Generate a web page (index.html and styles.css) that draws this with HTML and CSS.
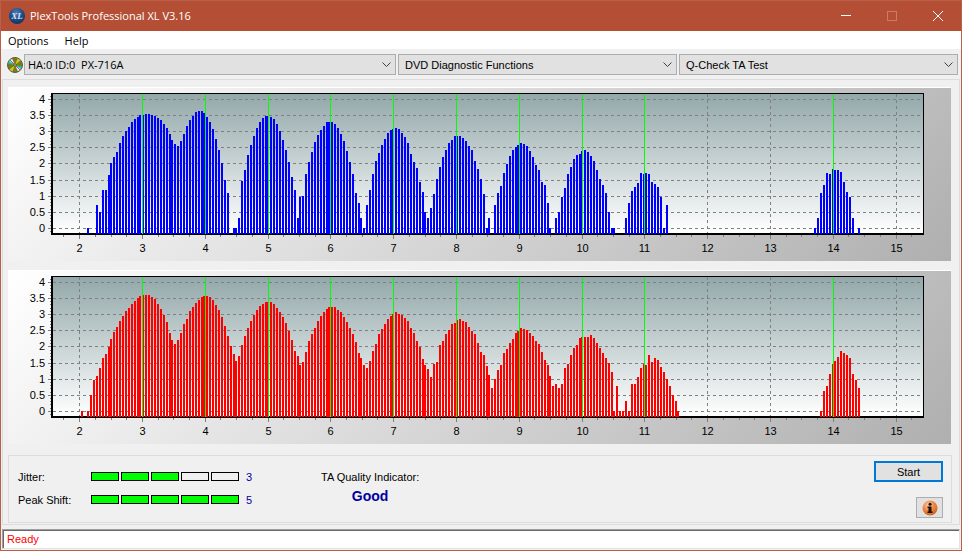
FILE: index.html
```html
<!DOCTYPE html>
<html lang="en">
<head>
<meta charset="utf-8">
<meta name="viewport" content="width=device-width, initial-scale=1">
<title>PlexTools Professional XL V3.16</title>
<link rel="stylesheet" href="styles.css">
</head>
<body>
<div class="window">
  <header class="titlebar">
    <svg class="app-icon" viewBox="0 0 16 16" aria-hidden="true">
      <defs>
        <radialGradient id="ball" cx="45%" cy="30%" r="70%">
          <stop offset="0" stop-color="#4f7fb5"/>
          <stop offset="0.6" stop-color="#1d4a86"/>
          <stop offset="1" stop-color="#123463"/>
        </radialGradient>
      </defs>
      <circle cx="8" cy="8" r="8" fill="url(#ball)"/>
      <text class="app-icon-text" x="8" y="11" text-anchor="middle">XL</text>
    </svg>
    <h1 class="title">PlexTools Professional XL V3.16</h1>
    <div class="window-buttons">
      <button class="window-button" type="button" aria-label="Minimize"><svg class="glyph" viewBox="0 0 10 10"><path d="M0 4.500h10"/></svg></button>
      <button class="window-button" type="button" aria-label="Maximize" disabled><svg class="glyph" viewBox="0 0 10 10"><path d="M.5.5h9v9h-9z"/></svg></button>
      <button class="window-button" type="button" aria-label="Close"><svg class="glyph smooth" viewBox="0 0 10 10"><path d="M0 0l10 10M10 0L0 10"/></svg></button>
    </div>
  </header>

  <nav class="menubar">
    <button class="menu" type="button">Options</button>
    <button class="menu" type="button">Help</button>
  </nav>

  <div class="toolbar">
    <svg class="disc" viewBox="0 0 16 16" aria-hidden="true">
      <circle cx="8" cy="8" r="7.5" fill="#7b7b1c" stroke="#5a5a50"/>
      <path d="M8 8L2 4.500A7 7 0 0 1 5 1.800z" fill="#f4f4f4"/>
      <path d="M8 8L1.300 6.500A7 7 0 0 1 2.500 3.800z" fill="#27d7c8"/>
      <path d="M8 8L14 11.500A7 7 0 0 1 11 14.200z" fill="#f4f4f4"/>
      <path d="M8 8L14.700 9.500A7 7 0 0 1 13.500 12.200z" fill="#27d7c8"/>
      <path d="M8 8L13.500 3.500A7 7 0 0 0 10.500 1.500z" fill="#c8c81e"/>
      <path d="M8 8L2.500 12.500A7 7 0 0 0 5.500 14.500z" fill="#c8c81e"/>
      <path d="M8 8L3 3M8 8L13 13" stroke="#c23ad0"/>
      <path d="M8 8L2 6M8 8L14 10" stroke="#20c040"/>
      <circle cx="8" cy="8" r="1.500" fill="#3d3d16"/>
      <circle cx="8" cy="8" r="0.800" fill="#e8e8e8"/>
    </svg>
    <div class="combos">
      <div class="combo">
        <select class="combo-field drive" aria-label="Drive"><option>HA:0 ID:0&nbsp; PX-716A</option></select>
        <svg class="chevron" viewBox="0 0 9 6" aria-hidden="true"><path d="M.5.500l4 4 4-4"/></svg>
      </div>
      <div class="combo">
        <select class="combo-field" aria-label="Function group"><option>DVD Diagnostic Functions</option></select>
        <svg class="chevron" viewBox="0 0 9 6" aria-hidden="true"><path d="M.5.500l4 4 4-4"/></svg>
      </div>
      <div class="combo">
        <select class="combo-field" aria-label="Test"><option>Q-Check TA Test</option></select>
        <svg class="chevron" viewBox="0 0 9 6" aria-hidden="true"><path d="M.5.500l4 4 4-4"/></svg>
      </div>
    </div>
  </div>

  <main class="page">
    <section class="chart" aria-label="Pit lengths"><svg class="plot" id="pits" viewBox="0 0 943 174" role="img"></svg></section>
    <section class="chart" aria-label="Land lengths"><svg class="plot" id="lands" viewBox="0 0 943 174" role="img"></svg></section>

    <section class="results">
      <div class="scores">
        <span class="score-name">Jitter:</span>
        <div class="meter" role="meter" aria-label="Jitter" aria-valuemin="0" aria-valuemax="5" aria-valuenow="3">
          <span class="cell on"></span><span class="cell on"></span><span class="cell on"></span><span class="cell"></span><span class="cell"></span>
        </div>
        <span class="score-value">3</span>
        <span class="score-name">Peak Shift:</span>
        <div class="meter" role="meter" aria-label="Peak Shift" aria-valuemin="0" aria-valuemax="5" aria-valuenow="5">
          <span class="cell on"></span><span class="cell on"></span><span class="cell on"></span><span class="cell on"></span><span class="cell on"></span>
        </div>
        <span class="score-value">5</span>
      </div>
      <div class="quality">
        <span class="quality-name">TA Quality Indicator:</span>
        <strong class="quality-value">Good</strong>
      </div>
      <div class="actions">
        <button class="start" type="button">Start</button>
        <button class="info" type="button" aria-label="Information">
          <svg class="info-icon" viewBox="0 0 16 16" aria-hidden="true">
            <defs>
              <radialGradient id="orange" cx="40%" cy="30%" r="70%">
                <stop offset="0" stop-color="#ffc9a0"/>
                <stop offset="0.5" stop-color="#f08a48"/>
                <stop offset="1" stop-color="#cf6420"/>
              </radialGradient>
            </defs>
            <circle cx="8" cy="8" r="7.5" fill="url(#orange)"/>
            <circle cx="8" cy="4.200" r="1.500" fill="#1c1008"/>
            <path d="M5.500 6.500H9.500V11.500H10.500V13H5.500V11.500H6.500V8H5.500z" fill="#1c1008"/>
          </svg>
        </button>
      </div>
    </section>
  </main>

  <footer class="statusbar">Ready</footer>
</div>
<script src="charts.js"></script>
</body>
</html>
```
FILE: styles.css
```css
* {
  box-sizing: border-box;
}

body {
  margin: 0;
  background: #f0f0f0;
  color: #000;
  font: 11px/14px "Liberation Sans", Arial, sans-serif;
}

button,
select {
  margin: 0;
  font: inherit;
  color: inherit;
}

.window {
  display: flex;
  flex-direction: column;
  min-height: 100vh;
  border: 1px solid #bb6048;
}

.titlebar {
  display: flex;
  align-items: center;
  height: 30px;
  padding-left: 8px;
  background: #b44f35;
  color: #fff;
}

.app-icon {
  width: 16px;
  height: 16px;
  margin-right: 5px;
}

.app-icon-text {
  fill: #d5e2f0;
  font: italic bold 9px "Liberation Serif", serif;
}

.title {
  flex: 1;
  margin: 0;
  font: 11px/16px "Open Sans", "Noto Sans", sans-serif;
}

.window-buttons {
  display: flex;
}

.window-button {
  display: flex;
  align-items: center;
  justify-content: center;
  width: 46px;
  height: 28px;
  padding: 0;
  border: 0;
  background: none;
}

.window-button:disabled {
  opacity: 0.25;
}

.glyph {
  width: 10px;
  height: 10px;
  fill: none;
  stroke: #fff;
  shape-rendering: crispEdges;
}

.glyph.smooth {
  overflow: visible;
  shape-rendering: auto;
}

.menubar {
  display: flex;
  gap: 16px;
  height: 18px;
  padding: 1px 7px 0;
  background: #fff;
}

.menu {
  padding: 0;
  border: 0;
  background: none;
  font: 11px/16px "Open Sans", "Noto Sans", sans-serif;
}

.toolbar {
  display: flex;
  align-items: center;
  gap: 1px;
  padding: 5px 3px 4px 6px;
}

.disc {
  flex: none;
  width: 16px;
  height: 16px;
}

.combos {
  display: grid;
  flex: 1;
  grid-template-columns: 4fr 3fr 3fr;
  gap: 2px;
}

.combo {
  position: relative;
}

.combo-field {
  display: block;
  width: 100%;
  height: 21px;
  padding: 0 20px 0 6px;
  border: 1px solid #adadad;
  border-radius: 0;
  background: #e1e1e1;
  appearance: none;
  text-overflow: clip;
}

.combo-field.drive {
  padding-left: 3px;
  font: 11px/16px "Open Sans", "Noto Sans", sans-serif;
}

.chevron {
  position: absolute;
  top: 8px;
  right: 5px;
  width: 9px;
  height: 6px;
  fill: none;
  stroke: #404040;
  pointer-events: none;
}

.page {
  display: flex;
  flex-direction: column;
  gap: 9px;
  margin: 0 1px;
  padding: 7px 7px 1px 5px;
  border: 1px solid #dcdcdc;
}

.chart {
  margin-right: 1px;
  border-top: 1px solid #fff;
  background: linear-gradient(135deg, #fff, #afafaf);
}

.plot {
  display: block;
  width: 100%;
  margin-top: -1px;
}

.plot-label {
  fill: #000;
  font: 11px "Liberation Sans", Arial, sans-serif;
}

.results {
  display: flex;
  margin-top: 2px;
  padding: 5px 8px 4px 9px;
  border: 1px solid #dcdcdc;
}

.scores {
  display: grid;
  grid-template-columns: 73px 148px 75px;
  grid-auto-rows: 23px;
  align-items: center;
  padding-top: 4px;
}

.meter {
  display: grid;
  grid-template-columns: repeat(5, 1fr);
  gap: 2px;
}

.cell {
  height: 9px;
  border: 1px solid #000;
}

.cell.on {
  background: #0f0;
}

.score-value {
  padding-left: 7px;
  color: #0000a0;
}

.quality {
  display: flex;
  flex-direction: column;
  align-items: center;
  padding: 9px 0 0 7px;
}

.quality-value {
  color: #0000a0;
  font-size: 14px;
  line-height: 24px;
}

.actions {
  display: flex;
  flex-direction: column;
  align-items: flex-end;
  justify-content: space-between;
  gap: 15px;
  margin-left: auto;
}

.start {
  width: 69px;
  height: 21px;
  padding: 0;
  border: 2px solid #0078d7;
  background: #e1e1e1;
}

.info {
  display: flex;
  align-items: center;
  justify-content: center;
  width: 27px;
  height: 21px;
  padding: 0;
  border: 1px solid #adadad;
  background: #e1e1e1;
}

.info-icon {
  width: 16px;
  height: 16px;
}

.statusbar {
  margin: 4px 1px 1px;
  padding: 2px 4px;
  border: 1px solid;
  border-color: #a0a0a0 #e3e3e3 #e3e3e3 #a0a0a0;
  background: #fff;
  box-shadow: inset 1px 1px #696969;
  color: #f00;
}
```
FILE: charts.js
```js
// Bar levels by slot; 32.25 level units make 1.0 on the vertical axis.
// null marks a slot without a reading.
const pits = [
  { slot: -7, levels: [
    0, null, null, 23, 16, 38, 38, 53, 65, 71, 76, 85, 92, 97, 101, 106, 109, 111,
    113, 113, 114, 114, 113, 112, 110, 108, 104, 100, 94, 88, 84, 82, 87, 94, 102,
    108, 112, 116, 117, 117, 115, 111, 106, 99, 89, 78, 65, 48, 35, null, 0, 0, 10,
    47, 58, 73, 83, 92, 100, 106, 110, 112, 112, 111, 109, 104, 97, 88, 78, 66, 51,
    38, 10, 31, 32, 54, 66, 76, 86, 93, 98, 102, 106, 106, 106, 104, 100, 94, 87,
    77, 66, 54, 35, 25, 10, 0, 23, 38, 54, 67, 75, 83, 89, 95, 98, 99, 100, 99, 95,
    91, 85, 74, 66, 60, 46, 36, 16, 10, 20, 34, 49, 61, 71, 78, 85, 88, 92, 92, 92,
    90, 87, 82, 78, 67, 59, 49, 34, 0, 10, null, 23, 35, 42, 55, 64, 72, 78, 81,
    83, 85, 84, 82, 77, 71, 63, 58, 46, 43, 25, 0, null, 10, 16, 31, 40, 54, 61,
    69, 73, 74, 77, 78, 76, 72, 67, 58, 49, 43, 35, 16, 0, 0, null, null, null, 10,
    25, 37, 41, 45, 55, 54, 55, 54, 46, 44, 41, 31, 0, 23] },
  { slot: 243, levels: [0, 10, 35, 43, 55, 54, 59, 58, 58, 56, 46, 36, 31, 10, null, 0] }
];

const lands = [
  { slot: -9, levels: [
    0, null, 0, 16, 31, 35, 43, 53, 57, 64, 72, 79, 84, 90, 95, 100, 103, 107, 110,
    113, 115, 116, 116, 116, 114, 112, 107, 102, 96, 89, 78, 71, 67, 71, 78, 87, 92,
    100, 104, 108, 111, 114, 115, 115, 114, 111, 106, 101, 94, 85, 75, 65, 57, 50,
    55, 66, 75, 83, 90, 96, 101, 105, 107, 109, 109, 109, 107, 103, 99, 94, 88, 80,
    71, 60, 55, 46, 49, 59, 70, 77, 83, 90, 95, 99, 102, 104, 104, 104, 101, 99, 94,
    89, 83, 77, 69, 58, 53, 46, 43, 50, 60, 67, 77, 82, 87, 92, 95, 97, 99, 97, 96,
    93, 90, 83, 78, 70, 64, 52, 46, 42, 34, 47, 49, 66, 70, 77, 81, 87, 88, 91, 92,
    90, 89, 84, 80, 77, 68, 59, 56, 45, 36, 23, 32, 41, 46, 58, 62, 68, 72, 78, 80,
    83, 82, 81, 78, 75, 70, 67, 59, 51, 46, 35, 25, 27, 23, 27, 43, 47, 56, 63, 66,
    73, 74, 74, 74, 76, 73, 68, 63, 58, 53, 48, 39, 0, 25, 0, 0, 10, 0, 27, 27, 34,
    43, 47, 46, 56, 49, 53, 51, 44, 39, 32, 25, 16, 10, 0] },
  { slot: 245, levels: [0, 20, 25, 37, 47, 50, 54, 60, 58, 56, 53, 37, 31, 23] }
];

const peaks = [3, 4, 5, 6, 7, 8, 9, 10, 11, 14];
const box = { left: 43, top: 6, right: 916, bottom: 148 };

const lengthX = value => Math.floor(71.65 + 62.8 * (value - 2));
const levelY = value => Math.round(140.9 - 32.25 * value);
const slotX = slot => 100 + 3 * slot - Math.floor((6 * slot + 64) / 65);

function rect(x, y, width, height, fill) {
  return `<rect x="${x}" y="${y}" width="${width}" height="${height}" fill="${fill}"/>`;
}

function label(x, y, anchor, text) {
  return `<text class="plot-label" x="${x}" y="${y}" text-anchor="${anchor}">${text}</text>`;
}

function dashed(path) {
  return `<path d="${path}" stroke="#808080" stroke-dasharray="3 3"/>`;
}

function draw(id, runs, color) {
  const shade = id + "-shade";
  const out = [
    `<defs><linearGradient id="${shade}" x1="0" y1="0" x2="0" y2="1">`,
    `<stop offset="0" stop-color="#93a8aa"/><stop offset="1" stop-color="#fff"/></linearGradient></defs>`,
    `<g shape-rendering="crispEdges">`,
    rect(box.left, box.top, box.right - box.left, box.bottom - box.top, "#000"),
    rect(box.left + 2, box.top + 1, box.right - box.left - 3, box.bottom - box.top - 3, `url(#${shade})`)
  ];
  const labels = [];

  for (let tenth = -1; tenth <= 41; tenth++) {
    out.push(rect(box.left - 1, levelY(tenth / 10), 1, 1, "#808080"));
  }
  for (let value = 0; value <= 4; value += 0.5) {
    const y = levelY(value);
    out.push(rect(box.left - 3, y, 3, 1, "#808080"));
    out.push(dashed(`M${box.left + 2} ${y + 0.5}H${box.right - 1}`));
    labels.push(label(37, y + 4, "end", value));
  }
  for (let value = 1.75; value <= 15.25; value += 0.25) {
    const whole = Number.isInteger(value);
    const x = lengthX(value);
    out.push(rect(x, box.bottom, 1, whole ? 4 : 2, "#808080"));
    if (whole) {
      out.push(dashed(`M${x + 0.5} ${box.top + 1}V${box.bottom - 2}`));
      labels.push(label(x + 0.5, 165, "middle", value));
    }
  }
  for (const run of runs) {
    run.levels.forEach((level, i) => {
      if (level !== null) {
        out.push(rect(slotX(run.slot + i), 141 - level, 2, level + 6, color));
      }
    });
  }
  for (const peak of peaks) {
    out.push(rect(lengthX(peak), box.top + 1, 1, 140, "#0f0"));
  }
  out.push("</g>", ...labels);
  document.getElementById(id).innerHTML = out.join("");
}

draw("pits", pits, "#00f");
draw("lands", lands, "#f00");
```
